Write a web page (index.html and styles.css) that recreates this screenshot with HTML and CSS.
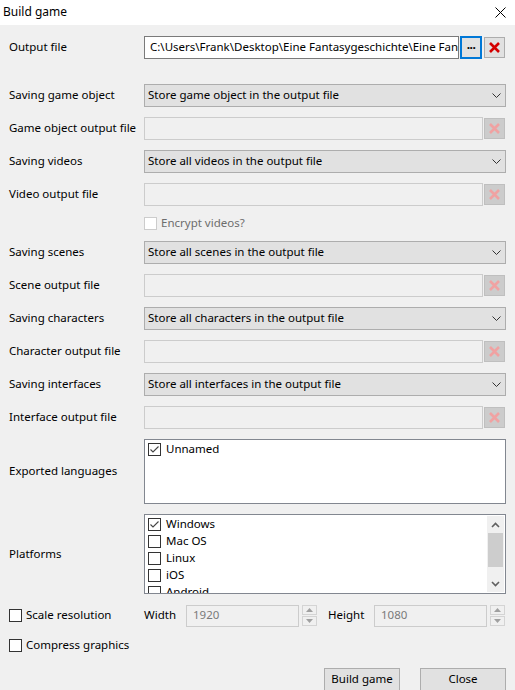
FILE: index.html
```html
<!DOCTYPE html>
<html lang="en">
<head>
    <meta charset="UTF-8">
    <title>Build game</title>
    <link rel="stylesheet" href="styles.css">
</head>
<body>

<div class="titlebar">
    <span class="title">Build game</span>
    <svg class="close-icon" width="11" height="11" viewBox="0 0 11 11"><path d="M0.5 0.5L10.5 10.5M10.5 0.5L0.5 10.5" stroke="#000" stroke-width="1" fill="none"/></svg>
</div>

<div class="dialog">
    <div class="row row-output">
        <div class="label">Output file</div>
        <div class="field">
            <div class="text-box">C:\Users\Frank\Desktop\Eine Fantasygeschichte\Eine Fantasygeschichte.exe</div>
            <div class="browse-btn">...</div>
            <div class="clear-btn">
                <svg width="11" height="11" viewBox="0 0 11 11"><path d="M1 1L10 10M10 1L1 10" stroke="#d40000" stroke-width="2.6" fill="none"/></svg>
            </div>
        </div>
    </div>

    <div class="row">
        <div class="label">Saving game object</div>
        <div class="combo">
            <span>Store game object in the output file</span>
            <svg width="9" height="5" viewBox="0 0 9 5"><path d="M0.5 0.5L4.5 4.5L8.5 0.5" stroke="#333" stroke-width="1" fill="none"/></svg>
        </div>
    </div>
    <div class="row">
        <div class="label">Game object output file</div>
        <div class="field">
            <div class="text-box disabled"></div>
            <div class="clear-btn disabled">
                <svg width="11" height="11" viewBox="0 0 11 11"><path d="M1 1L10 10M10 1L1 10" stroke="#f0a2a2" stroke-width="2.6" fill="none"/></svg>
            </div>
        </div>
    </div>

    <div class="row">
        <div class="label">Saving videos</div>
        <div class="combo">
            <span>Store all videos in the output file</span>
            <svg width="9" height="5" viewBox="0 0 9 5"><path d="M0.5 0.5L4.5 4.5L8.5 0.5" stroke="#333" stroke-width="1" fill="none"/></svg>
        </div>
    </div>
    <div class="row">
        <div class="label">Video output file</div>
        <div class="field">
            <div class="text-box disabled"></div>
            <div class="clear-btn disabled">
                <svg width="11" height="11" viewBox="0 0 11 11"><path d="M1 1L10 10M10 1L1 10" stroke="#f0a2a2" stroke-width="2.6" fill="none"/></svg>
            </div>
        </div>
    </div>
    <div class="row row-check">
        <div class="label"></div>
        <div class="check-line disabled">
            <span class="check-box"></span>
            <span class="check-text">Encrypt videos?</span>
        </div>
    </div>

    <div class="row">
        <div class="label">Saving scenes</div>
        <div class="combo">
            <span>Store all scenes in the output file</span>
            <svg width="9" height="5" viewBox="0 0 9 5"><path d="M0.5 0.5L4.5 4.5L8.5 0.5" stroke="#333" stroke-width="1" fill="none"/></svg>
        </div>
    </div>
    <div class="row">
        <div class="label">Scene output file</div>
        <div class="field">
            <div class="text-box disabled"></div>
            <div class="clear-btn disabled">
                <svg width="11" height="11" viewBox="0 0 11 11"><path d="M1 1L10 10M10 1L1 10" stroke="#f0a2a2" stroke-width="2.6" fill="none"/></svg>
            </div>
        </div>
    </div>

    <div class="row">
        <div class="label">Saving characters</div>
        <div class="combo">
            <span>Store all characters in the output file</span>
            <svg width="9" height="5" viewBox="0 0 9 5"><path d="M0.5 0.5L4.5 4.5L8.5 0.5" stroke="#333" stroke-width="1" fill="none"/></svg>
        </div>
    </div>
    <div class="row">
        <div class="label">Character output file</div>
        <div class="field">
            <div class="text-box disabled"></div>
            <div class="clear-btn disabled">
                <svg width="11" height="11" viewBox="0 0 11 11"><path d="M1 1L10 10M10 1L1 10" stroke="#f0a2a2" stroke-width="2.6" fill="none"/></svg>
            </div>
        </div>
    </div>

    <div class="row">
        <div class="label">Saving interfaces</div>
        <div class="combo">
            <span>Store all interfaces in the output file</span>
            <svg width="9" height="5" viewBox="0 0 9 5"><path d="M0.5 0.5L4.5 4.5L8.5 0.5" stroke="#333" stroke-width="1" fill="none"/></svg>
        </div>
    </div>
    <div class="row">
        <div class="label">Interface output file</div>
        <div class="field">
            <div class="text-box disabled"></div>
            <div class="clear-btn disabled">
                <svg width="11" height="11" viewBox="0 0 11 11"><path d="M1 1L10 10M10 1L1 10" stroke="#f0a2a2" stroke-width="2.6" fill="none"/></svg>
            </div>
        </div>
    </div>

    <div class="row row-languages">
        <div class="label">Exported languages</div>
        <div class="list-box">
            <div class="list-items">
                <div class="list-item">
                    <span class="check-box checked"><svg width="11" height="11" viewBox="0 0 11 11"><path d="M1.5 5.5L4 8L9.5 2.5" stroke="#444" stroke-width="1.1" fill="none"/></svg></span>
                    <span class="check-text">Unnamed</span>
                </div>
            </div>
        </div>
    </div>

    <div class="row row-platforms">
        <div class="label">Platforms</div>
        <div class="list-box">
            <div class="list-items">
                <div class="list-item">
                    <span class="check-box checked"><svg width="11" height="11" viewBox="0 0 11 11"><path d="M1.5 5.5L4 8L9.5 2.5" stroke="#444" stroke-width="1.1" fill="none"/></svg></span>
                    <span class="check-text">Windows</span>
                </div>
                <div class="list-item"><span class="check-box"></span><span class="check-text">Mac OS</span></div>
                <div class="list-item"><span class="check-box"></span><span class="check-text">Linux</span></div>
                <div class="list-item"><span class="check-box"></span><span class="check-text">iOS</span></div>
                <div class="list-item"><span class="check-box"></span><span class="check-text">Android</span></div>
            </div>
            <div class="scrollbar">
                <div class="scroll-arrow">
                    <svg width="9" height="6" viewBox="0 0 9 6"><path d="M1 5L4.5 1.5L8 5" stroke="#606060" stroke-width="1.6" fill="none"/></svg>
                </div>
                <div class="scroll-thumb"></div>
                <div class="scroll-track"></div>
                <div class="scroll-arrow">
                    <svg width="9" height="6" viewBox="0 0 9 6"><path d="M1 1L4.5 4.5L8 1" stroke="#606060" stroke-width="1.6" fill="none"/></svg>
                </div>
            </div>
        </div>
    </div>

    <div class="row row-scale">
        <div class="label check-line">
            <span class="check-box"></span>
            <span class="check-text">Scale resolution</span>
        </div>
        <span class="spin-label">Width</span>
        <div class="spin-box">
            <div class="spin-input">1920</div>
            <div class="spin-buttons">
                <div class="spin-btn"><svg width="7" height="4" viewBox="0 0 7 4"><path d="M0 4L3.5 0L7 4Z" fill="#a0a0a0"/></svg></div>
                <div class="spin-btn"><svg width="7" height="4" viewBox="0 0 7 4"><path d="M0 0L3.5 4L7 0Z" fill="#a0a0a0"/></svg></div>
            </div>
        </div>
        <span class="spin-label spin-label-height">Height</span>
        <div class="spin-box">
            <div class="spin-input">1080</div>
            <div class="spin-buttons">
                <div class="spin-btn"><svg width="7" height="4" viewBox="0 0 7 4"><path d="M0 4L3.5 0L7 4Z" fill="#a0a0a0"/></svg></div>
                <div class="spin-btn"><svg width="7" height="4" viewBox="0 0 7 4"><path d="M0 0L3.5 4L7 0Z" fill="#a0a0a0"/></svg></div>
            </div>
        </div>
    </div>

    <div class="row row-compress">
        <div class="check-line">
            <span class="check-box"></span>
            <span class="check-text">Compress graphics</span>
        </div>
    </div>

    <div class="button-row">
        <div class="push-btn btn-build">Build game</div>
        <div class="push-btn btn-close">Close</div>
    </div>
</div>

</body>
</html>
```

FILE: styles.css
```css
body {
    margin: 0;
    background-color: #f0f0f0;
    font-family: "Noto Sans", "Liberation Sans", sans-serif;
    font-size: 11.5px;
    line-height: 15px;
    color: #000;
    overflow: hidden;
}
.titlebar {
    height: 25px;
    background-color: #fff;
    display: flex;
    align-items: center;
    justify-content: space-between;
    padding: 0 9px 0 3px;
}
.title {
    font-size: 12px;
    padding-bottom: 2px;
}
.dialog {
    padding: 11px 9px 0 9px;
    display: flex;
    flex-direction: column;
    gap: 10px;
}
.row {
    display: flex;
    align-items: center;
    height: 23px;
}
.label {
    width: 135px;
    flex: none;
    padding-bottom: 2px;
}
.row-output {
    margin-bottom: 15px;
}
.field {
    flex: 1;
    display: flex;
    align-items: center;
    min-width: 0;
}
.text-box {
    flex: 1;
    min-width: 0;
    height: 23px;
    box-sizing: border-box;
    border: 1px solid #7a7a7a;
    background-color: #fff;
    padding: 0 0 0 5px;
    line-height: 19px;
    white-space: nowrap;
    overflow: hidden;
}
.text-box.disabled {
    border-color: #cccccc;
    background-color: #f0f0f0;
}
.browse-btn {
    width: 22px;
    height: 23px;
    box-sizing: border-box;
    margin-left: 1px;
    border: 2px solid #0078d7;
    background-color: #e1e1e1;
    text-align: center;
    font-size: 12px;
    font-weight: bold;
    line-height: 13px;
    letter-spacing: -0.5px;
}
.clear-btn {
    width: 21px;
    height: 21px;
    box-sizing: border-box;
    margin: 0 1px 0 2px;
    border: 1px solid #adadad;
    background-color: #e1e1e1;
    display: flex;
    align-items: center;
    justify-content: center;
}
.clear-btn.disabled {
    margin-left: 1px;
    border-color: #bfbfbf;
    background-color: #cccccc;
}
.combo {
    flex: 1;
    height: 23px;
    box-sizing: border-box;
    border: 1px solid #adadad;
    background-color: #e1e1e1;
    padding: 0 4px 0 3px;
    display: flex;
    align-items: center;
    justify-content: space-between;
}
.combo span {
    padding-bottom: 2px;
}
.row-check {
    height: 15px;
}
.check-line {
    display: flex;
    align-items: center;
    gap: 4px;
}
.check-text {
    line-height: 13px;
    padding-bottom: 2px;
}
.label.check-line {
    padding-bottom: 0;
}
.check-line.disabled {
    color: #6d6d6d;
}
.check-box {
    width: 13px;
    height: 13px;
    box-sizing: border-box;
    border: 1px solid #333;
    background-color: #fff;
    flex: none;
    display: flex;
    align-items: center;
    justify-content: center;
}
.check-line.disabled .check-box {
    border-color: #cccccc;
}
.row-languages {
    height: 65px;
}
.row-platforms {
    height: 80px;
}
.list-box {
    flex: 1;
    height: 100%;
    box-sizing: border-box;
    border: 1px solid #828790;
    background-color: #fff;
    display: flex;
    overflow: hidden;
}
.list-items {
    flex: 1;
    padding: 1px 0 0 3px;
}
.list-item {
    height: 17px;
    display: flex;
    align-items: center;
    gap: 5px;
}
.scrollbar {
    width: 17px;
    margin: 1px 1px 1px 0;
    background-color: #f0f0f0;
    display: flex;
    flex-direction: column;
}
.scroll-arrow {
    height: 17px;
    display: flex;
    align-items: center;
    justify-content: center;
}
.scroll-thumb {
    height: 34px;
    margin: 0 1px;
    background-color: #cdcdcd;
}
.scroll-track {
    flex: 1;
}
.spin-label {
    width: 42px;
    padding-bottom: 2px;
}
.spin-label-height {
    width: 46px;
    margin-left: 11px;
}
.spin-box {
    display: flex;
    align-items: center;
}
.spin-input {
    width: 113px;
    height: 22px;
    box-sizing: border-box;
    border: 1px solid #cccccc;
    background-color: #f0f0f0;
    color: #7a7a7a;
    padding-left: 6px;
    line-height: 18px;
}
.spin-buttons {
    display: flex;
    flex-direction: column;
    gap: 1px;
    margin-left: 3px;
}
.spin-btn {
    width: 15px;
    height: 10px;
    box-sizing: border-box;
    border: 1px solid #d4d4d4;
    background-color: #f0f0f0;
    display: flex;
    align-items: center;
    justify-content: center;
}
.row-compress {
    height: 15px;
    margin-top: 1px;
}
.button-row {
    display: flex;
    justify-content: flex-end;
    gap: 20px;
    margin-top: 5px;
}
.push-btn {
    height: 23px;
    box-sizing: border-box;
    border: 1px solid #adadad;
    background-color: #e1e1e1;
    text-align: center;
    line-height: 19px;
}
.btn-build {
    width: 76px;
}
.btn-close {
    width: 86px;
}
```
